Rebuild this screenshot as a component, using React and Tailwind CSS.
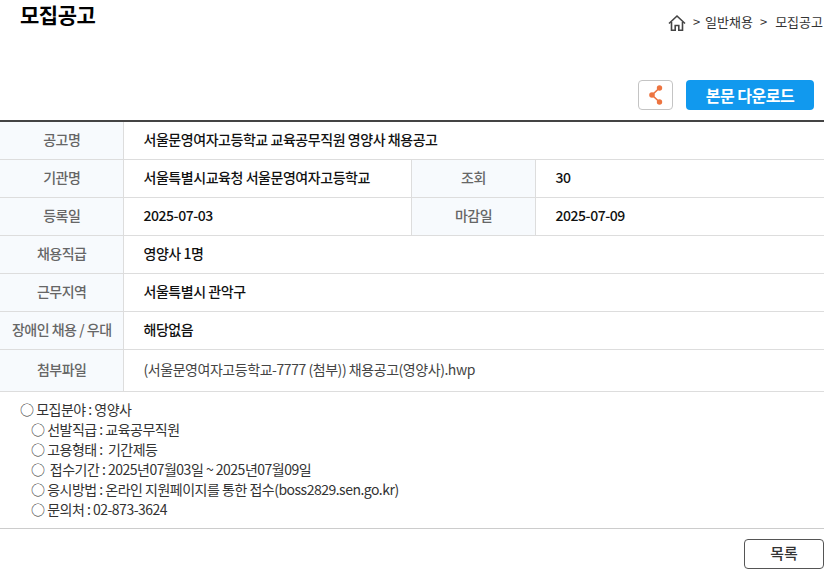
const rows = [
  { label: "기관명", value: "서울특별시교육청 서울문영여자고등학교", label2: "조회", value2: "30" },
  { label: "등록일", value: "2025-07-03", label2: "마감일", value2: "2025-07-09" },
];

const singles = [
  { label: "채용직급", value: "영양사 1명" },
  { label: "근무지역", value: "서울특별시 관악구" },
  { label: "장애인 채용 / 우대", value: "해당없음" },
];

const details = [
  "○ 선발직급 : 교육공무직원",
  "○ 고용형태 :  기간제등",
  "○  접수기간 : 2025년07월03일 ~ 2025년07월09일",
  "○ 응시방법 : 온라인 지원페이지를 통한 접수(boss2829.sen.go.kr)",
  "○ 문의처 : 02-873-3624",
];

const thClass =
  "h-[38px] border-b border-r border-[#dddddd] bg-[#f7fafd] pb-[2px] pl-[1px] pr-0 pt-0 text-center text-[14px] font-medium tracking-[-0.5px] text-[#666666]";
const tdClass = "border-b border-[#dddddd] px-5 pb-[2px] pt-0 text-[14px] font-medium tracking-[-0.45px] text-[#111111]";

export default function App() {
  return (
    <div className="h-[569px] w-[824px] overflow-hidden bg-white font-['Noto_Sans_CJK_KR','Noto_Sans',sans-serif]">
      <div className="flex h-[80px] items-start justify-between pl-5">
        <h1 className="text-[21px] font-bold leading-[28px] tracking-[-0.5px] text-black">모집공고</h1>
        <div className="mr-[1px] mt-[11px] flex items-center whitespace-nowrap text-[13px] leading-[20px] text-[#333333]">
          <svg width="18" height="18" viewBox="0 0 18 18" fill="none" stroke="#444444" strokeWidth="1.6" className="mr-[7px] mt-[3px]">
            <path d="M1 9.5 9 2l8 7.5" />
            <path d="M3.5 8v8.2h3.7v-4.7h3.6v4.7h3.7V8" />
          </svg>
          <span>&gt;</span>
          <span className="ml-[5px]">일반채용</span>
          <span className="ml-[7px]">&gt;</span>
          <span className="ml-[8px]">모집공고</span>
        </div>
      </div>

      <div className="flex h-[40px] items-start justify-end gap-[13px] pr-[10px]">
        <button type="button" className="flex h-[30px] w-[35px] items-center justify-center rounded-[4px] border border-[#c4c4c4] bg-white">
          <svg width="14" height="20" viewBox="0 0 14 20">
            <path d="M10.5 3 3 10l7.5 7" fill="none" stroke="#ed7440" strokeWidth="1.6" />
            <circle cx="10.5" cy="3" r="2.7" fill="#ed7440" />
            <circle cx="3" cy="10" r="2.8" fill="#ed7440" />
            <circle cx="10.5" cy="17" r="2.7" fill="#ed7440" />
          </svg>
        </button>
        <button type="button" className="h-[30px] w-[128px] rounded-[4px] bg-[#1199ee] text-[16px] font-bold tracking-[-0.5px] text-white">
          본문 다운로드
        </button>
      </div>

      <table className="w-full table-fixed border-collapse border-t-2 border-[#444444]">
        <colgroup>
          <col className="w-[123px]" />
          <col className="w-[288px]" />
          <col className="w-[124px]" />
          <col />
        </colgroup>
        <tbody>
          <tr>
            <th className={thClass}>공고명</th>
            <td colSpan={3} className={tdClass}>서울문영여자고등학교 교육공무직원 영양사 채용공고</td>
          </tr>
          {rows.map((row) => (
            <tr key={row.label}>
              <th className={thClass}>{row.label}</th>
              <td className={`${tdClass} border-r`}>{row.value}</td>
              <th className={thClass}>{row.label2}</th>
              <td className={tdClass}>{row.value2}</td>
            </tr>
          ))}
          {singles.map((row) => (
            <tr key={row.label}>
              <th className={thClass}>{row.label}</th>
              <td colSpan={3} className={tdClass}>{row.value}</td>
            </tr>
          ))}
          <tr>
            <th className="h-[42px] border-b border-r border-[#dddddd] bg-[#f7fafd] pb-[2px] pl-[1px] pr-0 pt-0 text-center text-[14px] font-medium tracking-[-0.5px] text-[#666666]">첨부파일</th>
            <td colSpan={3} className="border-b border-[#dddddd] px-5 pb-[2px] pt-0 text-[14px] tracking-[-0.45px] text-[#444444]">
              (서울문영여자고등학교-7777 (첨부)) 채용공고(영양사).hwp
            </td>
          </tr>
        </tbody>
      </table>

      <div className="h-[137px] whitespace-pre border-b border-[#cccccc] pl-5 pt-[7px] text-[14px] leading-[20px] tracking-[-0.5px] text-[#333333]">
        <p>○ 모집분야 : 영양사</p>
        {details.map((line) => (
          <p key={line} className="pl-[11px]">{line}</p>
        ))}
      </div>

      <div className="flex justify-end pt-[10px]">
        <button type="button" className="h-[30px] w-[80px] rounded-[4px] border border-[#555555] bg-white text-[15px] font-medium text-[#333333]">
          목록
        </button>
      </div>
    </div>
  );
}
